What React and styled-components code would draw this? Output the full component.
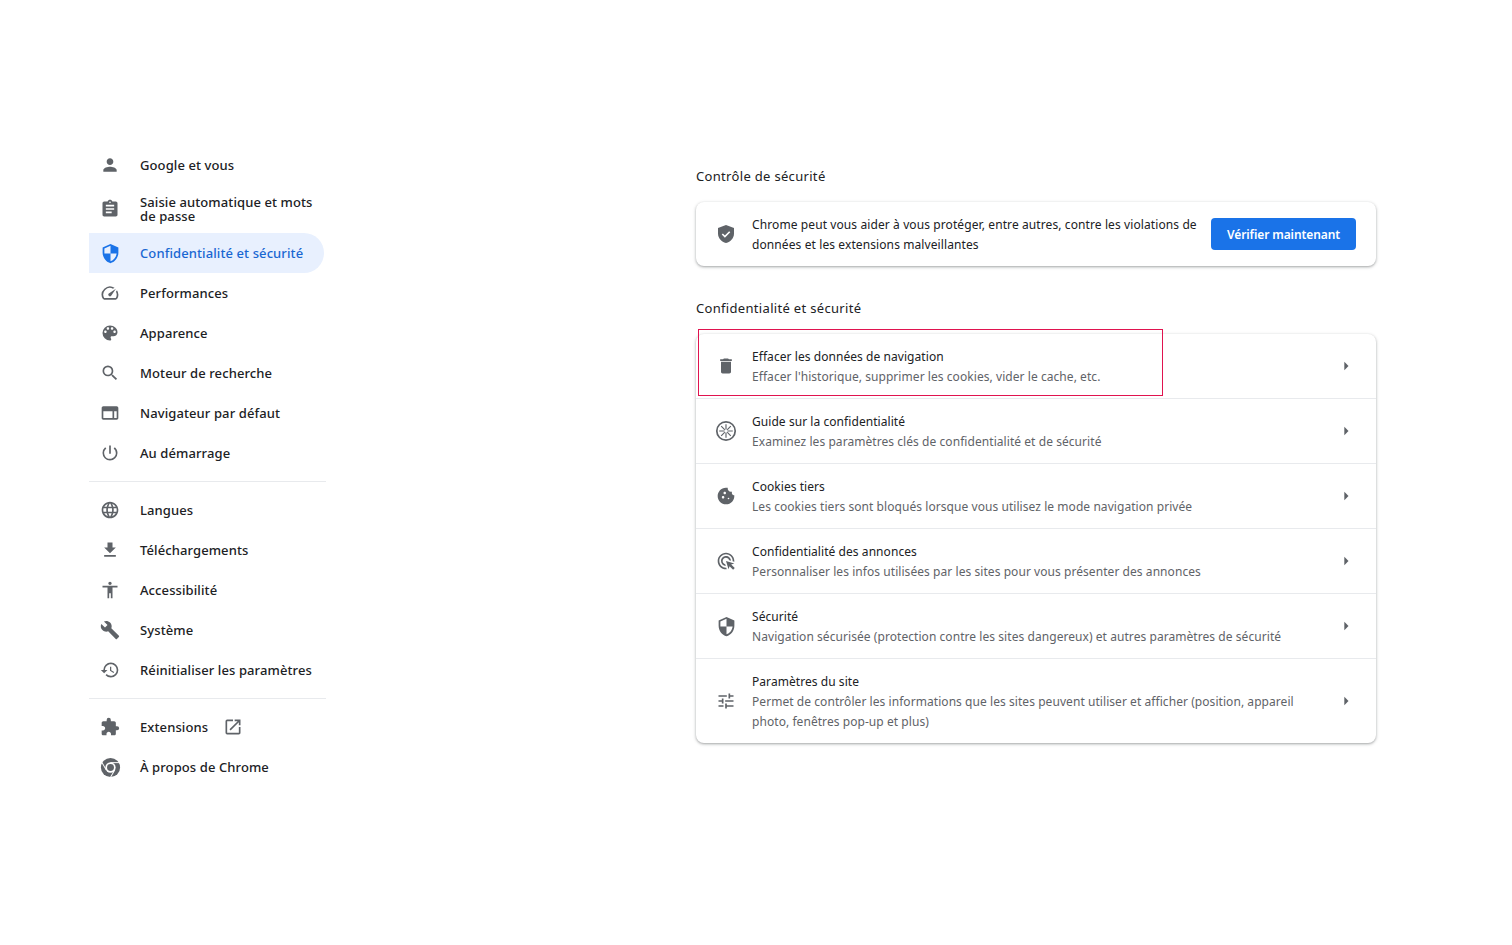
import React from 'react';
import styled, { createGlobalStyle } from 'styled-components';

const Global = createGlobalStyle`
  html, body { margin: 0; padding: 0; background: #fff; }
  body { font-family: "Noto Sans", "Open Sans", Arial, sans-serif; color: #202124; }
`;

const Page = styled.div`
  width: 1512px;
  height: 945px;
  display: flex;
  align-items: flex-start;
  overflow: hidden;
`;

const Sidebar = styled.nav`
  width: 237px;
  margin: 145px 0 0 89px;
  display: flex;
  flex-direction: column;
`;

const NavItem = styled.div`
  width: 235px;
  height: ${p => (p.$tall ? 48 : 40)}px;
  box-sizing: border-box;
  padding-left: 11px;
  display: flex;
  align-items: center;
  gap: 20px;
  border-radius: 0 20px 20px 0;
  background: ${p => (p.$active ? '#e8f0fe' : 'transparent')};
  color: ${p => (p.$active ? '#1967d2' : '#202124')};
`;

const NavLabel = styled.span`
  font-size: 13px;
  font-weight: 500;
  line-height: 14px;
  letter-spacing: 0.1px;
  width: 180px;
`;

const NavLabelShort = styled(NavLabel)`
  width: auto;
  margin-right: -5px;
`;

const Divider = styled.hr`
  width: 237px;
  height: 1px;
  margin: 8px 0;
  border: 0;
  background: #e8eaed;
`;

const Icon = styled.svg`
  flex: none;
  display: block;
  width: ${p => p.$size || 20}px;
  height: ${p => p.$size || 20}px;
  margin: ${p => (p.$size ? (20 - p.$size) / 2 : 0)}px;
  fill: ${p => p.$color || '#5f6368'};
`;

const Main = styled.main`
  width: 680px;
  margin: 145px 0 0 370px;
  display: flex;
  flex-direction: column;
`;

const Heading = styled.h2`
  margin: 0;
  height: 57px;
  padding-top: 22px;
  box-sizing: border-box;
  font-size: 13px;
  font-weight: 400;
  line-height: 18px;
  letter-spacing: 0.32px;
  color: #202124;
`;

const Heading2 = styled(Heading)`
  height: 68px;
  padding-top: 33px;
`;

const Card = styled.section`
  position: relative;
  background: #fff;
  border-radius: 8px;
  box-shadow: 0 1px 2px rgba(60, 64, 67, 0.3), 0 1px 3px 1px rgba(60, 64, 67, 0.15);
`;

const CheckRow = styled.div`
  height: 64px;
  display: flex;
  align-items: center;
  padding: 0 20px;
`;

const IconSlot = styled.div`
  width: 20px;
  height: 20px;
  margin-right: 16px;
  flex: none;
  display: flex;
  align-items: center;
  justify-content: center;
`;

const CheckText = styled.div`
  flex: 1;
  padding-top: 2px;
  font-size: 12px;
  line-height: 20px;
  letter-spacing: 0.1px;
  color: #202124;
`;

const PrimaryButton = styled.button`
  flex: none;
  width: 145px;
  height: 32px;
  border: 0;
  border-radius: 4px;
  background: #1a73e8;
  color: #fff;
  font-family: inherit;
  font-size: 12px;
  font-weight: 600;
  letter-spacing: -0.1px;
  padding: 0;
`;

const Row = styled.div`
  display: flex;
  align-items: center;
  box-sizing: border-box;
  height: ${p => p.$h}px;
  padding: 0 20px;
  border-top: ${p => (p.$first ? 0 : '1px solid #e8eaed')};
`;

const RowText = styled.div`
  flex: 1;
  padding-top: 2px;
  font-size: 12px;
  line-height: 20px;
  letter-spacing: 0.06px;
`;

const RowTitle = styled.div`
  color: #202124;
`;

const RowSub = styled.div`
  color: #5f6368;
`;

const Arrow = styled.svg`
  flex: none;
  width: 20px;
  height: 20px;
  fill: #5f6368;
`;

const Highlight = styled.div`
  position: absolute;
  left: 2px;
  top: -5px;
  width: 465px;
  height: 67px;
  box-sizing: border-box;
  border: 1px solid #e0134f;
  pointer-events: none;
`;

const P = ({ d, size, color, rule }) => (
  <Icon viewBox="0 0 24 24" $size={size} $color={color}>
    <path d={d} fillRule={rule} />
  </Icon>
);

const ChromeIcon = () => (
  <Icon viewBox="0 0 24 24" $size={23}>
    <circle cx="12" cy="12" r="10" />
    <circle cx="12" cy="12" r="5.4" fill="#fff" />
    <circle cx="12" cy="12" r="3.6" />
    <g stroke="#fff" strokeWidth="1" fill="none">
      <path d="M12 6.9h10" />
      <path d="M12 6.9h10" transform="rotate(120 12 12)" />
      <path d="M12 6.9h10" transform="rotate(240 12 12)" />
    </g>
  </Icon>
);

const GuideIcon = () => (
  <Icon viewBox="0 0 24 24" $size={24}>
    <circle cx="12" cy="12" r="9.2" fill="none" stroke="#5f6368" strokeWidth="1.7" />
    <path d="M12 5.2v13.6M5.2 12h13.6M7.2 7.2l9.6 9.6M16.8 7.2l-9.6 9.6" stroke="#5f6368" strokeWidth="1.15" fill="none" />
    <circle cx="12" cy="12" r="1.7" fill="#fff" />
  </Icon>
);

const ShieldCheck = () => (
  <Icon viewBox="0 0 20 20">
    <path d="M10 1 2 4v5.5c0 4.5 3.4 8.4 8 9.5 4.6-1.1 8-5 8-9.5V4z" />
    <path d="m6.3 10 2.6 2.6 4.8-4.8" fill="none" stroke="#fff" strokeWidth="1.6" />
  </Icon>
);

const icons = {
  person: 'M12 12c2.21 0 4-1.79 4-4s-1.79-4-4-4-4 1.79-4 4 1.79 4 4 4zm0 2c-2.67 0-8 1.34-8 4v2h16v-2c0-2.66-5.33-4-8-4z',
  assignment: 'M19 3h-4.18C14.4 1.84 13.3 1 12 1c-1.3 0-2.4.84-2.82 2H5c-1.1 0-2 .9-2 2v14c0 1.1.9 2 2 2h14c1.1 0 2-.9 2-2V5c0-1.1-.9-2-2-2zm-7 0c.55 0 1 .45 1 1s-.45 1-1 1-1-.45-1-1 .45-1 1-1zm2 14H7v-2h7v2zm3-4H7v-2h10v2zm0-4H7V7h10v2z',
  security: 'M12 1L3 5v6c0 5.55 3.84 10.74 9 12 5.16-1.26 9-6.45 9-12V5l-9-4zm0 10.99h7c-.53 4.12-3.28 7.79-7 8.94V12H5V6.3l7-3.11v8.8z',
  speed: 'M20.38 8.57l-1.23 1.85a8 8 0 0 1-.22 7.58H5.07A8 8 0 0 1 15.58 6.85l1.85-1.23A10 10 0 0 0 3.35 19a2 2 0 0 0 1.72 1h13.85a2 2 0 0 0 1.74-1 10 10 0 0 0-.27-10.44zm-9.79 6.84a2 2 0 0 0 2.83 0l5.66-8.49-8.49 5.66a2 2 0 0 0 0 2.83z',
  palette: 'M12 3a9 9 0 0 0 0 18c.83 0 1.5-.67 1.5-1.5 0-.39-.15-.74-.39-1.01-.23-.26-.38-.61-.38-.99 0-.83.67-1.5 1.5-1.5H16c2.76 0 5-2.24 5-5 0-4.42-4.03-8-9-8zm-5.5 9c-.83 0-1.5-.67-1.5-1.5S5.67 9 6.5 9 8 9.67 8 10.5 7.33 12 6.5 12zm3-4C8.67 8 8 7.33 8 6.5S8.67 5 9.5 5s1.5.67 1.5 1.5S10.33 8 9.5 8zm5 0c-.83 0-1.5-.67-1.5-1.5S13.67 5 14.5 5s1.5.67 1.5 1.5S15.33 8 14.5 8zm3 4c-.83 0-1.5-.67-1.5-1.5S16.67 9 17.5 9s1.5.67 1.5 1.5-.67 1.5-1.5 1.5z',
  search: 'M15.5 14h-.79l-.28-.27A6.471 6.471 0 0 0 16 9.5 6.5 6.5 0 1 0 9.5 16c1.61 0 3.09-.59 4.23-1.57l.27.28v.79l5 4.99L20.49 19l-4.99-5zm-6 0C7.01 14 5 11.99 5 9.5S7.01 5 9.5 5 14 7.01 14 9.5 11.99 14 9.5 14z',
  browser: 'M20 4H4c-1.1 0-2 .9-2 2v12c0 1.1.9 2 2 2h16c1.1 0 2-.9 2-2V6c0-1.1-.9-2-2-2zM4 18v-8h11v8H4zm16 0h-3v-8h3v8z',
  power: 'M13 3h-2v10h2V3zm4.83 2.17l-1.42 1.42A6.92 6.92 0 0 1 19 12c0 3.87-3.13 7-7 7A6.995 6.995 0 0 1 7.58 6.58L6.17 5.17A8.932 8.932 0 0 0 3 12a9 9 0 0 0 18 0c0-2.74-1.23-5.18-3.17-6.83z',
  language: 'M11.99 2C6.47 2 2 6.48 2 12s4.47 10 9.99 10C17.52 22 22 17.52 22 12S17.52 2 11.99 2zm6.93 6h-2.95a15.65 15.65 0 0 0-1.38-3.56A8.03 8.03 0 0 1 18.92 8zM12 4.04c.83 1.2 1.48 2.53 1.91 3.96h-3.82c.43-1.43 1.08-2.76 1.91-3.96zM4.26 14C4.1 13.36 4 12.69 4 12s.1-1.36.26-2h3.38c-.08.66-.14 1.32-.14 2 0 .68.06 1.34.14 2H4.26zm.82 2h2.95c.32 1.25.78 2.45 1.38 3.56A7.987 7.987 0 0 1 5.08 16zm2.95-8H5.08a7.987 7.987 0 0 1 4.33-3.56A15.65 15.65 0 0 0 8.03 8zM12 19.96c-.83-1.2-1.48-2.53-1.91-3.96h3.82c-.43 1.43-1.08 2.76-1.91 3.96zM14.34 14H9.66c-.09-.66-.16-1.32-.16-2 0-.68.07-1.35.16-2h4.68c.09.65.16 1.32.16 2 0 .68-.07 1.34-.16 2zm.25 5.56c.6-1.11 1.06-2.31 1.38-3.56h2.95a8.03 8.03 0 0 1-4.33 3.56zM16.36 14c.08-.66.14-1.32.14-2 0-.68-.06-1.34-.14-2h3.38c.16.64.26 1.31.26 2s-.1 1.36-.26 2h-3.38z',
  download: 'M19 9h-4V3H9v6H5l7 7 7-7zM5 18v2h14v-2H5z',
  accessibility: 'M12 2c1.1 0 2 .9 2 2s-.9 2-2 2-2-.9-2-2 .9-2 2-2zm9 7h-6v13h-2v-6h-2v6H9V9H3V7h18v2z',
  build: 'M22.7 19l-9.1-9.1c.9-2.3.4-5-1.5-6.9-2-2-5-2.4-7.4-1.3L9 6 6 9 1.6 4.7C.4 7.1.9 10.1 2.9 12.1c1.9 1.9 4.6 2.4 6.9 1.5l9.1 9.1c.4.4 1 .4 1.4 0l2.3-2.3c.5-.4.5-1.1.1-1.4z',
  restore: 'M13 3a9 9 0 0 0-9 9H1l3.89 3.89.07.14L9 12H6c0-3.87 3.13-7 7-7s7 3.13 7 7-3.13 7-7 7c-1.93 0-3.68-.79-4.94-2.06l-1.42 1.42A8.954 8.954 0 0 0 13 21a9 9 0 0 0 0-18zm-1 5v5l4.28 2.54.72-1.21-3.5-2.08V8H12z',
  extension: 'M20.5 11H19V7c0-1.1-.9-2-2-2h-4V3.5a2.5 2.5 0 0 0-5 0V5H4c-1.1 0-1.99.9-1.99 2v3.8H3.5c1.49 0 2.7 1.21 2.7 2.7s-1.21 2.7-2.7 2.7H2V20c0 1.1.9 2 2 2h3.8v-1.5c0-1.49 1.21-2.7 2.7-2.7 1.49 0 2.7 1.21 2.7 2.7V22H17c1.1 0 2-.9 2-2v-4h1.5a2.5 2.5 0 0 0 0-5z',
  open: 'M19 19H5V5h7V3H5a2 2 0 0 0-2 2v14a2 2 0 0 0 2 2h14c1.1 0 2-.9 2-2v-7h-2v7zM14 3v2h3.59l-9.83 9.83 1.41 1.41L19 6.41V10h2V3h-7z',
  trash: 'M6 19c0 1.1.9 2 2 2h8c1.1 0 2-.9 2-2V7H6v12zM19 4h-3.5l-1-1h-5l-1 1H5v2h14V4z',
  cookie: 'M21.95 10.99c-1.79-.03-3.7-1.95-2.68-4.22-2.97 1-5.78-1.59-5.19-4.56C7.11.74 2 6.41 2 12c0 5.52 4.48 10 10 10 5.89 0 10.54-5.08 9.95-11.01zM8.5 15c-.83 0-1.5-.67-1.5-1.5S7.67 12 8.5 12s1.5.67 1.5 1.5S9.33 15 8.5 15zm2-5C9.67 10 9 9.33 9 8.5S9.67 7 10.5 7s1.5.67 1.5 1.5-.67 1.5-1.5 1.5zm4.5 6c-.55 0-1-.45-1-1s.45-1 1-1 1 .45 1 1-.45 1-1 1z',
  ads: 'M11.71 17.99A5.993 5.993 0 0 1 6 12c0-3.31 2.69-6 6-6 3.22 0 5.84 2.53 5.99 5.71l-2.1-.63A3.999 3.999 0 0 0 12 8c-2.21 0-4 1.79-4 4 0 1.9 1.33 3.49 3.11 3.89l.6 2.1zM22 12c0 .3-.01.6-.04.9l-1.97-.59c.01-.1.01-.21.01-.31 0-4.42-3.58-8-8-8s-8 3.58-8 8 3.58 8 8 8c.1 0 .21 0 .31-.01l.59 1.97c-.3.03-.6.04-.9.04-5.52 0-10-4.48-10-10S6.48 2 12 2s10 4.48 10 10zm-3.77 4.26L22 15l-10-3 3 10 1.26-3.77 4.27 4.27 1.98-1.98-4.28-4.26z',
  tune: 'M3 17v2h6v-2H3zM3 5v2h10V5H3zm10 16v-2h8v-2h-8v-2h-2v6h2zM7 9v2H3v2h4v2h2V9H7zm14 4v-2H11v2h10zm-6-4h2V7h4V5h-4V3h-2v6z',
};

const NavEntry = ({ icon, children, tall, active, size }) => (
  <NavItem $tall={tall} $active={active}>
    {typeof icon === 'string' ? (
      <P d={icons[icon]} size={size} color={active ? '#1a73e8' : undefined} rule="evenodd" />
    ) : icon}
    <NavLabel>{children}</NavLabel>
  </NavItem>
);

const rows = [
  { icon: 'trash', h: 64, title: 'Effacer les données de navigation', sub: "Effacer l'historique, supprimer les cookies, vider le cache, etc." },
  { icon: <GuideIcon />, h: 65, title: 'Guide sur la confidentialité', sub: 'Examinez les paramètres clés de confidentialité et de sécurité' },
  { icon: 'cookie', h: 65, title: 'Cookies tiers', sub: 'Les cookies tiers sont bloqués lorsque vous utilisez le mode navigation privée' },
  { icon: 'ads', h: 65, title: 'Confidentialité des annonces', sub: 'Personnaliser les infos utilisées par les sites pour vous présenter des annonces' },
  { icon: 'security', size: 21, h: 65, title: 'Sécurité', sub: 'Navigation sécurisée (protection contre les sites dangereux) et autres paramètres de sécurité' },
  { icon: 'tune', h: 85, title: 'Paramètres du site', sub: <>Permet de contrôler les informations que les sites peuvent utiliser et afficher (position, appareil<br />photo, fenêtres pop-up et plus)</> },
];

export default function App() {
  return (
    <Page>
      <Global />
      <Sidebar>
        <NavEntry icon="person">Google et vous</NavEntry>
        <NavEntry icon="assignment" tall>Saisie automatique et mots de passe</NavEntry>
        <NavEntry icon="security" size={21} active>Confidentialité et sécurité</NavEntry>
        <NavEntry icon="speed">Performances</NavEntry>
        <NavEntry icon="palette">Apparence</NavEntry>
        <NavEntry icon="search">Moteur de recherche</NavEntry>
        <NavEntry icon="browser">Navigateur par défaut</NavEntry>
        <NavEntry icon="power">Au démarrage</NavEntry>
        <Divider />
        <NavEntry icon="language">Langues</NavEntry>
        <NavEntry icon="download">Téléchargements</NavEntry>
        <NavEntry icon="accessibility">Accessibilité</NavEntry>
        <NavEntry icon="build">Système</NavEntry>
        <NavEntry icon="restore">Réinitialiser les paramètres</NavEntry>
        <Divider />
        <NavItem>
          <P d={icons.extension} />
          <NavLabelShort>Extensions</NavLabelShort>
          <P d={icons.open} />
        </NavItem>
        <NavEntry icon={<ChromeIcon />}>À propos de Chrome</NavEntry>
      </Sidebar>
      <Main>
        <Heading>Contrôle de sécurité</Heading>
        <Card>
          <CheckRow>
            <IconSlot><ShieldCheck /></IconSlot>
            <CheckText>
              Chrome peut vous aider à vous protéger, entre autres, contre les violations de<br />
              données et les extensions malveillantes
            </CheckText>
            <PrimaryButton>Vérifier maintenant</PrimaryButton>
          </CheckRow>
        </Card>
        <Heading2>Confidentialité et sécurité</Heading2>
        <Card>
          <Highlight />
          {rows.map((r, i) => (
            <Row key={r.title} $h={r.h} $first={i === 0}>
              <IconSlot>
                {typeof r.icon === 'string' ? <P d={icons[r.icon]} size={r.size} /> : r.icon}
              </IconSlot>
              <RowText>
                <RowTitle>{r.title}</RowTitle>
                <RowSub>{r.sub}</RowSub>
              </RowText>
              <Arrow viewBox="0 0 24 24"><path d="M10 17l5-5-5-5v10z" /></Arrow>
            </Row>
          ))}
        </Card>
      </Main>
    </Page>
  );
}
